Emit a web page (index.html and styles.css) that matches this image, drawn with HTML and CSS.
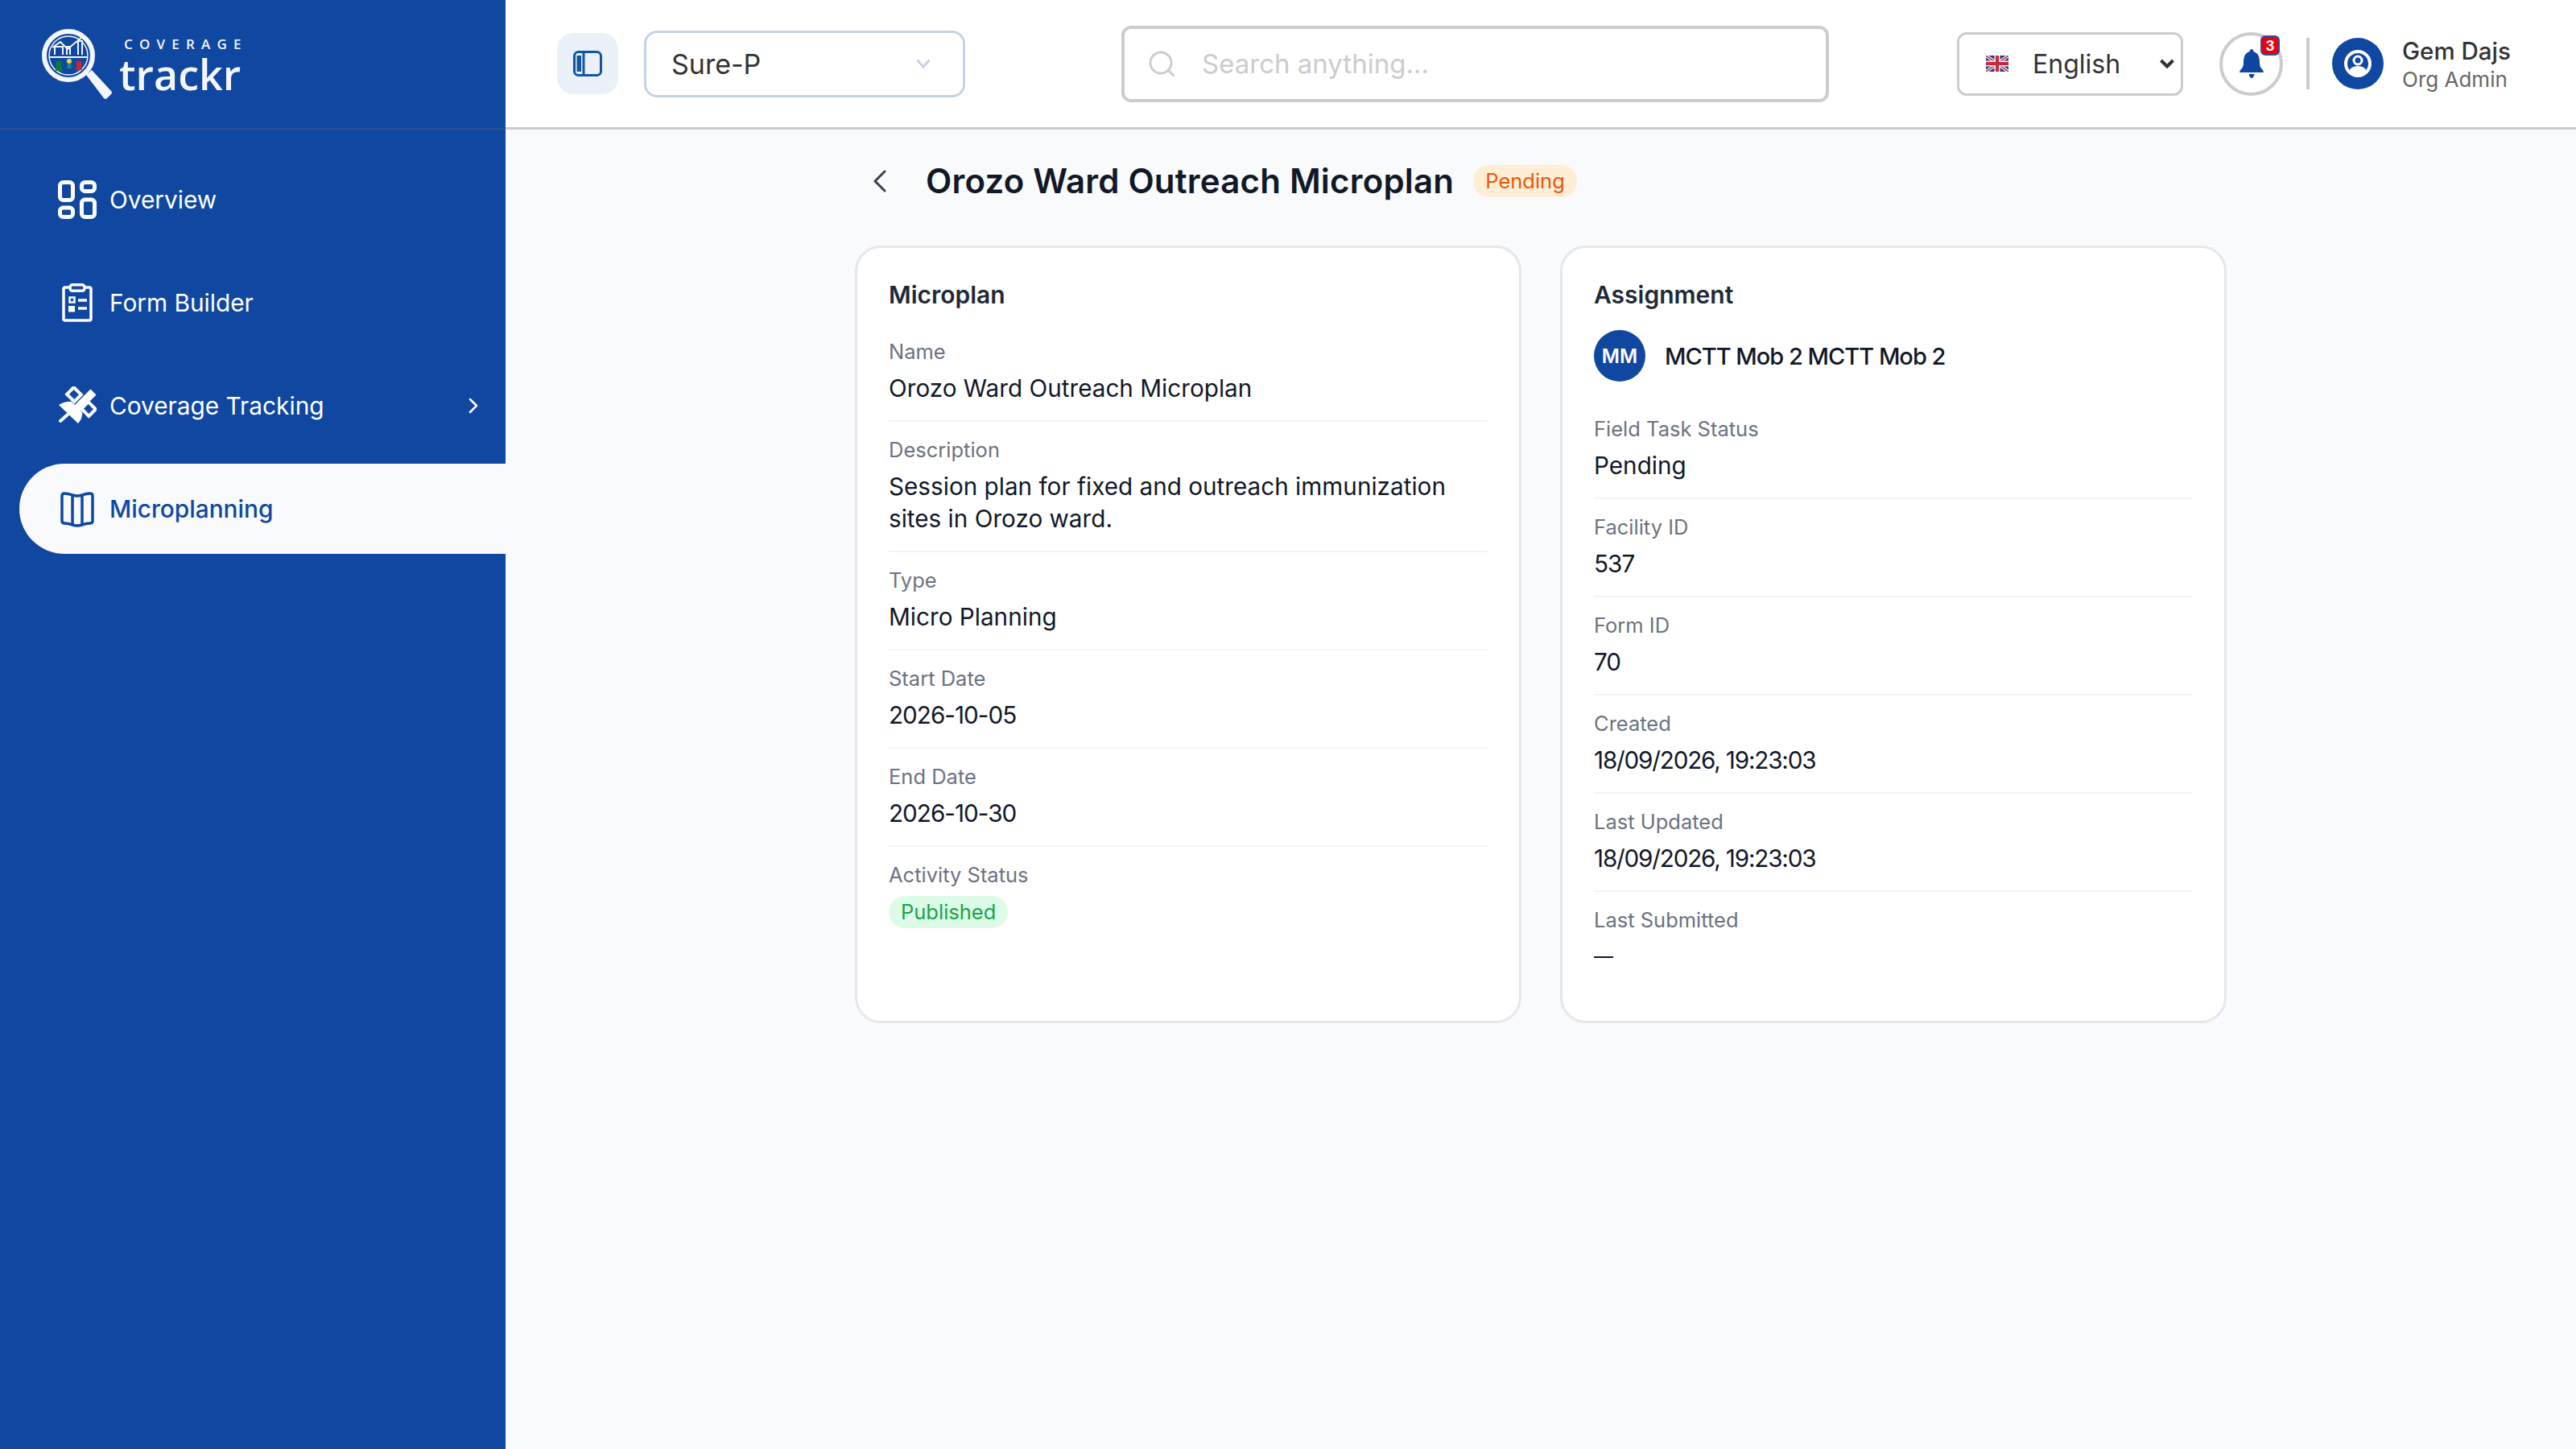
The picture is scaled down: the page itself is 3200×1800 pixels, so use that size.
FILE: index.html
```html
<!DOCTYPE html>
<html lang="en">
<head>
<meta charset="UTF-8">
<meta name="viewport" content="width=device-width, initial-scale=1.0">
<title>Orozo Ward Outreach Microplan</title>
<link rel="stylesheet" href="styles.css">
</head>
<body>
<div class="app">
  <aside class="sidebar">
    <div class="brand">
      <svg class="brand-mark" viewBox="0 0 92 90" width="92" height="90">
        <circle cx="34" cy="34" r="30" fill="none" stroke="#f4f6fa" stroke-width="6"/>
        <path d="M56 58l7-6 24 26q2 2 0 4l-5 5q-2 2-4 0z" fill="#f4f6fa"/>
        <circle cx="34" cy="34" r="24" fill="none" stroke="#f4f6fa" stroke-width="1.5"/>
        <path d="M11 36h46" stroke="#f4f6fa" stroke-width="2"/>
        <path d="M17 33V23h10v10M32 33V23h4v10M46 33V16h5v17M14 24l10-7 9 9 18-15" fill="none" stroke="#f4f6fa" stroke-width="2"/>
        <circle cx="22" cy="44" r="3.500" fill="#0d7a3a"/>
        <path d="M19 47h6l2 6h-9z" fill="#0d7a3a"/>
        <circle cx="35" cy="41" r="3" fill="#e8d83a"/>
        <path d="M33 44h4l1 6h-6z" fill="#1c8a8a"/>
        <circle cx="47" cy="44" r="3.500" fill="#d3222a"/>
        <path d="M44 47h6l1 5h-8z" fill="#d3222a"/>
      </svg>
      <div class="brand-text">
        <span class="brand-small">COVERAGE</span>
        <span class="brand-big">trackr</span>
      </div>
    </div>
    <nav class="nav">
      <a class="nav-item">
        <svg class="nav-icon" viewBox="0 0 48 48" fill="none" stroke="currentColor" stroke-width="5">
          <rect x="2.500" y="2.500" width="16" height="22" rx="4"/>
          <rect x="29.500" y="2.500" width="16" height="11" rx="4"/>
          <rect x="29.500" y="24" width="16" height="21.500" rx="4"/>
          <rect x="2.500" y="34" width="16" height="11.500" rx="4"/>
        </svg>
        <span>Overview</span>
      </a>
      <a class="nav-item">
        <svg class="nav-icon" viewBox="0 0 48 48" fill="none" stroke="currentColor" stroke-width="3.500">
          <path d="M14 5H9q-2 0-2 2v37q0 2 2 2h30q2 0 2-2V7q0-2-2-2h-5"/>
          <rect x="15" y="1.800" width="18" height="7.500" rx="3"/>
          <rect x="14.500" y="17.500" width="6" height="6" stroke-width="2.500"/>
          <rect x="13" y="28" width="8" height="7.500" fill="currentColor" stroke="none"/>
          <path d="M25 21h11M25 31h11"/>
        </svg>
        <span>Form Builder</span>
      </a>
      <a class="nav-item">
        <svg class="nav-icon" viewBox="0 0 48 48" fill="none" stroke="currentColor">
          <path d="M44 7L22 29" stroke-width="10" stroke-linejoin="round"/>
          <path d="M1 23q9-5 16-4l13 13q1 7-5 14z" fill="currentColor" stroke="none"/>
          <path d="M3 43l9-8" stroke-width="4" stroke-linecap="round"/>
          <rect x="-6.500" y="-6" width="13" height="12" stroke-width="4" transform="translate(20 10) rotate(45)"/>
          <rect x="-6.500" y="-6" width="13" height="12" stroke-width="4" transform="translate(38 28) rotate(45)"/>
        </svg>
        <span>Coverage Tracking</span>
        <svg class="nav-arrow" viewBox="0 0 12 20" fill="none" stroke="currentColor" stroke-width="2.500" stroke-linecap="round" stroke-linejoin="round"><path d="M2 2l8 8-8 8"/></svg>
      </a>
      <a class="nav-item active">
        <svg class="nav-icon" viewBox="0 0 48 48" fill="none" stroke="currentColor" stroke-width="3.500" stroke-linejoin="round">
          <path d="M5 8q0-3 3-3 5 0 10 2 6 2 12 0 5-2 10-2 3 0 3 3v31q0 3-3 3-5 0-10 2-6 2-12 0-5-2-10-2-3 0-3-3z"/>
          <path d="M18 7v36M30 7v36"/>
        </svg>
        <span>Microplanning</span>
      </a>
    </nav>
  </aside>

  <div class="main">
    <header class="topbar">
      <div class="topbar-left">
        <button class="toggle">
          <svg viewBox="0 0 36 32" width="36" height="32" fill="none" stroke="#0f56a3" stroke-width="3">
            <rect x="1.500" y="1.500" width="33" height="29" rx="5"/>
            <path d="M13 2v28"/>
            <rect x="4.500" y="6" width="5.500" height="20" fill="#0f56a3" stroke="none"/>
          </svg>
        </button>
        <div class="org-select">
          <span>Sure-P</span>
          <svg viewBox="0 0 18 12" width="18" height="12" fill="none" stroke="#c5d2e6" stroke-width="3"><path d="M1.500 1.500L9 10l7.500-8.500"/></svg>
        </div>
      </div>
      <div class="search">
        <svg viewBox="0 0 32 32" width="32" height="32" fill="none" stroke="#cccccc" stroke-width="3" stroke-linecap="round"><circle cx="15" cy="15" r="13"/><path d="M25 25l6 6"/></svg>
        <span>Search anything...</span>
      </div>
      <div class="topbar-right">
        <div class="lang">
          <svg class="flag" viewBox="0 0 28 20" width="28" height="20">
            <rect width="28" height="20" fill="#2b3a7c"/>
            <path d="M0 0l28 20M28 0L0 20" stroke="#f3f3f6" stroke-width="4"/>
            <path d="M0 0l28 20M28 0L0 20" stroke="#c8283e" stroke-width="1.500"/>
            <path d="M14 0v20M0 10h28" stroke="#f3f3f6" stroke-width="7"/>
            <path d="M14 0v20M0 10h28" stroke="#c8283e" stroke-width="4"/>
          </svg>
          <span>English</span>
          <svg class="lang-arrow" viewBox="0 0 18 12" width="18" height="12" fill="none" stroke="#333333" stroke-width="4"><path d="M1.500 2L9 9.500 16.500 2"/></svg>
        </div>
        <button class="bell">
          <svg viewBox="0 0 30 36" width="30" height="36" fill="#0d47a1">
            <path d="M15 0q2 0 2.500 3C24 5 25 11 25 17q0 6 4 9l1 3H0l1-3q4-3 4-9C5 11 6 5 12.500 3 13 0 15 0 15 0z"/>
            <path d="M11.500 31h7q-1 5-3.500 5t-3.500-5z"/>
          </svg>
          <span class="bell-count">3</span>
        </button>
        <div class="divider"></div>
        <div class="user">
          <div class="user-avatar">
            <svg viewBox="0 0 36 36" width="36" height="36">
              <circle cx="18" cy="18" r="15" fill="none" stroke="#ffffff" stroke-width="4"/>
              <circle cx="18" cy="14" r="5" fill="none" stroke="#ffffff" stroke-width="3"/>
              <path d="M7 27q3-6 11-6t11 6q-4 6-11 6T7 27z" fill="#ffffff"/>
            </svg>
          </div>
          <div class="user-info">
            <div class="user-name">Gem Dajs</div>
            <div class="user-role">Org Admin</div>
          </div>
        </div>
      </div>
    </header>

    <main class="content">
      <div class="page">
        <div class="page-head">
          <svg class="back" viewBox="0 0 18 28" width="18" height="28" fill="none" stroke="#374151" stroke-width="3" stroke-linecap="round" stroke-linejoin="round"><path d="M15 2L3 14l12 12"/></svg>
          <h1>Orozo Ward Outreach Microplan</h1>
          <span class="badge badge-pending">Pending</span>
        </div>
        <div class="cards">
          <section class="card">
            <h2>Microplan</h2>
            <div class="field">
              <div class="label">Name</div>
              <div class="value">Orozo Ward Outreach Microplan</div>
            </div>
            <div class="field">
              <div class="label">Description</div>
              <div class="value">Session plan for fixed and outreach immunization<br>sites in Orozo ward.</div>
            </div>
            <div class="field">
              <div class="label">Type</div>
              <div class="value">Micro Planning</div>
            </div>
            <div class="field">
              <div class="label">Start Date</div>
              <div class="value num">2026-10-05</div>
            </div>
            <div class="field">
              <div class="label">End Date</div>
              <div class="value num">2026-10-30</div>
            </div>
            <div class="field field-last">
              <div class="label">Activity Status</div>
              <span class="badge badge-published">Published</span>
            </div>
          </section>
          <section class="card">
            <h2>Assignment</h2>
            <div class="assignee">
              <div class="initials">MM</div>
              <div class="assignee-name">MCTT Mob 2 MCTT Mob 2</div>
            </div>
            <div class="field">
              <div class="label">Field Task Status</div>
              <div class="value">Pending</div>
            </div>
            <div class="field">
              <div class="label">Facility ID</div>
              <div class="value num">537</div>
            </div>
            <div class="field">
              <div class="label">Form ID</div>
              <div class="value num">70</div>
            </div>
            <div class="field">
              <div class="label">Created</div>
              <div class="value stamp">18/09/2026, 19:23:03</div>
            </div>
            <div class="field">
              <div class="label">Last Updated</div>
              <div class="value stamp">18/09/2026, 19:23:03</div>
            </div>
            <div class="field field-last">
              <div class="label">Last Submitted</div>
              <div class="value dash">—</div>
            </div>
          </section>
        </div>
      </div>
    </main>
  </div>
</div>
</body>
</html>
```

FILE: styles.css
```css
* {
  box-sizing: border-box;
}

body {
  margin: 0;
  font-family: Inter, "Noto Sans", sans-serif;
  background-color: #f9fafb;
  color: #111827;
}

.app {
  display: flex;
  height: 1800px;
  overflow: hidden;
}

/* sidebar */
.sidebar {
  width: 628px;
  flex-shrink: 0;
  background-color: #0f47a1;
  color: #fff;
}

.brand {
  height: 161px;
  padding: 35px 0 0 51px;
  border-bottom: 2px solid #2a5596;
  display: flex;
  align-items: flex-start;
}

.brand-mark {
  flex-shrink: 0;
}

.brand-text {
  margin-left: 5px;
  display: flex;
  flex-direction: column;
  color: #f4f6fa;
  font-family: "Open Sans", sans-serif;
}

.brand-small {
  margin: 11px 0 0 6px;
  font-size: 17px;
  line-height: 18px;
  font-weight: 600;
  letter-spacing: 8.200px;
  white-space: nowrap;
}

.brand-big {
  font-size: 52px;
  line-height: 56px;
  font-weight: 600;
}

.nav {
  padding: 31px 0 0 24px;
  display: flex;
  flex-direction: column;
  gap: 16px;
}

.nav-item {
  height: 112px;
  padding-left: 48px;
  padding-right: 34px;
  display: flex;
  align-items: center;
  gap: 16px;
  font-size: 29.800px;
  white-space: nowrap;
}

.nav-item.active {
  background-color: #f9fafb;
  color: #0f47a1;
  border-radius: 56px 0 0 56px;
  font-weight: 500;
}

.nav-icon {
  width: 48px;
  height: 48px;
  flex-shrink: 0;
}

.nav-arrow {
  width: 12px;
  height: 20px;
  margin-left: auto;
}

/* top bar */
.main {
  flex: 1;
  min-width: 0;
  display: flex;
  flex-direction: column;
}

.topbar {
  height: 161px;
  flex-shrink: 0;
  background-color: #fff;
  border-bottom: 3px solid #cccccc;
  padding-left: 64px;
  display: flex;
  align-items: center;
  color: #333;
}

.topbar-left {
  display: flex;
  align-items: center;
  gap: 32px;
}

.toggle {
  width: 76px;
  height: 76px;
  padding: 0;
  border: none;
  border-radius: 20px;
  background-color: #ebf1f8;
  display: flex;
  align-items: center;
  justify-content: center;
}

.org-select {
  width: 399px;
  height: 83px;
  padding: 0 40px 0 31px;
  border: 3px solid #c5d2e6;
  border-radius: 16px;
  display: flex;
  align-items: center;
  justify-content: space-between;
  font-size: 34px;
}

.search {
  width: 879px;
  height: 95px;
  margin-left: 194px;
  padding-left: 30px;
  border: 4px solid #cccccc;
  border-radius: 12px;
  display: flex;
  align-items: center;
  gap: 34px;
  font-size: 33px;
  color: #cccccc;
}

.topbar-right {
  margin-left: 159px;
  display: flex;
  align-items: center;
}

.lang {
  width: 281px;
  height: 79px;
  padding: 0 8px 0 33px;
  border: 3px solid #cccccc;
  border-radius: 12px;
  display: flex;
  align-items: center;
  font-size: 32px;
}

.flag {
  flex-shrink: 0;
}

.lang span {
  margin-left: 30px;
}

.lang-arrow {
  margin-left: auto;
}

.bell {
  position: relative;
  width: 79px;
  height: 79px;
  margin-left: 45px;
  padding: 0;
  background: none;
  border: 4px solid #cccccc;
  border-radius: 50%;
  display: flex;
  align-items: center;
  justify-content: center;
}

.bell-count {
  position: absolute;
  top: 0;
  right: 0;
  width: 24px;
  height: 25px;
  background-color: #e8000b;
  border: 2px solid #2f4ea0;
  border-radius: 6px;
  color: #fff;
  font-size: 19px;
  line-height: 21px;
  font-weight: 700;
  text-align: center;
}

.divider {
  width: 4px;
  height: 64px;
  margin-left: 29px;
  background-color: #cccccc;
}

.user {
  margin-left: 28px;
  display: flex;
  align-items: center;
  gap: 23px;
}

.user-avatar {
  width: 64px;
  height: 64px;
  border-radius: 50%;
  background-color: #0f47a1;
  display: flex;
  align-items: center;
  justify-content: center;
}

.user-info {
  padding-top: 3px;
}

.user-name {
  font-size: 29.500px;
  line-height: 35px;
  font-weight: 500;
}

.user-role {
  font-size: 26px;
  line-height: 35px;
  color: #666;
}

/* page */
.content {
  flex: 1;
  min-height: 0;
}

.page {
  width: 1704px;
  margin: 0 auto;
}

.page-head {
  height: 128px;
  margin-bottom: 16px;
  padding-left: 22px;
  display: flex;
  align-items: center;
}

h1 {
  margin: 0 0 0 48px;
  font-size: 42px;
  line-height: 56px;
  font-weight: 600;
  letter-spacing: 0.200px;
}

.badge {
  display: inline-block;
  height: 40px;
  padding: 0 15px;
  border-radius: 20px;
  font-size: 25.500px;
  line-height: 40px;
}

.badge-pending {
  margin-left: 24px;
  background-color: #ffedd5;
  color: #ea580c;
}

.badge-published {
  margin-top: 8px;
  background-color: #dcfce7;
  color: #16a34a;
}

.cards {
  display: grid;
  grid-template-columns: 1fr 1fr;
  gap: 48px;
}

.card {
  padding: 36px 39px 40px;
  background-color: #fff;
  border: 3px solid #e5e7eb;
  border-radius: 32px;
}

h2 {
  margin: 0 0 31px;
  font-size: 30px;
  line-height: 44px;
  font-weight: 600;
  color: #1f2937;
}

.assignee {
  margin-top: -9px;
  margin-bottom: 41px;
  display: flex;
  align-items: center;
  gap: 24px;
}

.initials {
  width: 64px;
  height: 64px;
  border-radius: 50%;
  background-color: #0f47a1;
  color: #fff;
  font-size: 24px;
  font-weight: 600;
  display: flex;
  align-items: center;
  justify-content: center;
}

.assignee-name {
  font-size: 29px;
  font-weight: 500;
  letter-spacing: -1px;
}

.field {
  padding-bottom: 20px;
  margin-bottom: 17px;
  border-bottom: 2px solid #f3f4f6;
}

.field-last {
  border-bottom: none;
  margin-bottom: 0;
}

.label {
  font-size: 25.500px;
  line-height: 36px;
  color: #6b7280;
}

.value {
  margin-top: 7px;
  font-size: 29.700px;
  line-height: 40px;
}

.num {
  letter-spacing: -1px;
}

.stamp {
  letter-spacing: -1.200px;
}

.dash {
  font-size: 24px;
}
```
